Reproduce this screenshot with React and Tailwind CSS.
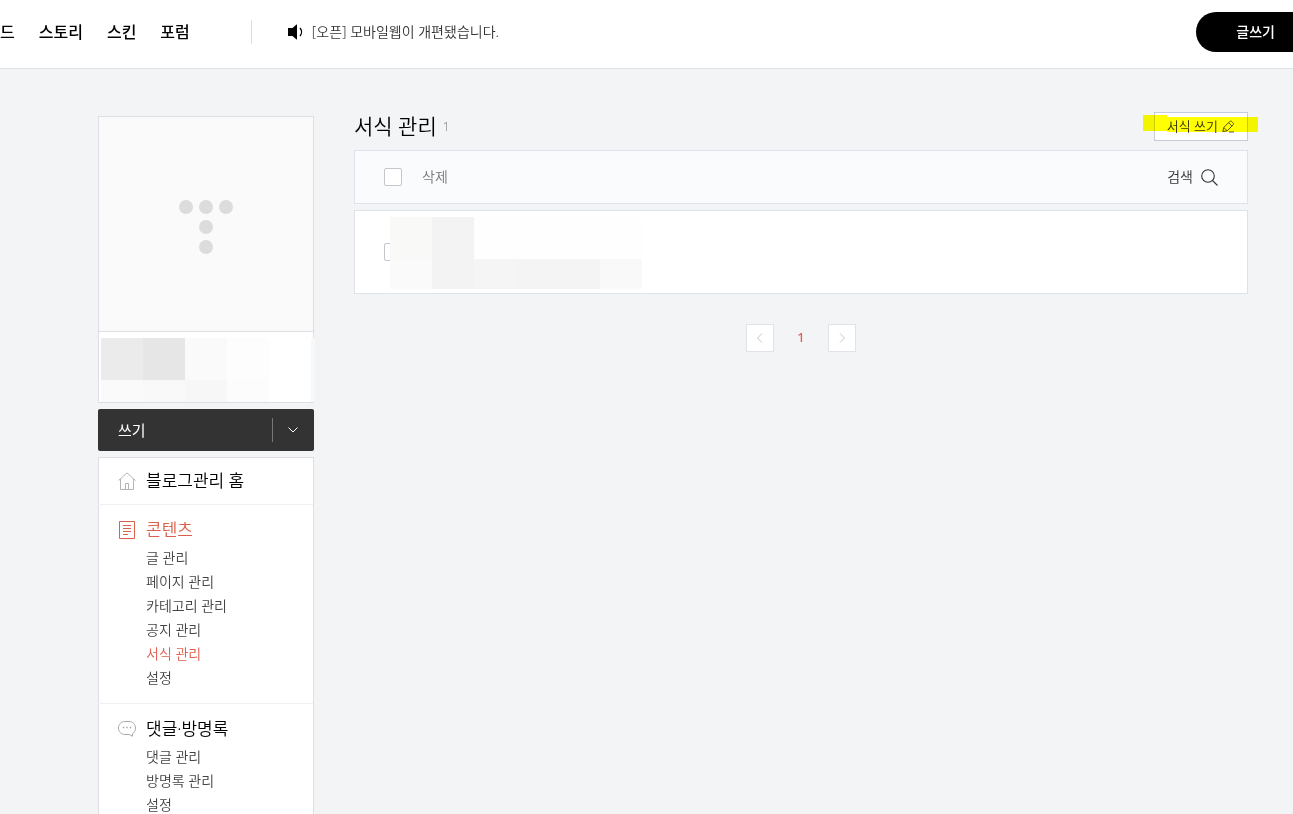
import React from "react";

const contentLinks = ["글 관리", "페이지 관리", "카테고리 관리", "공지 관리", "서식 관리", "설정"];
const commentLinks = ["댓글 관리", "방명록 관리", "설정"];

function SpeakerIcon() {
  return (
    <svg width="16" height="16" viewBox="0 0 16 16" aria-hidden="true">
      <path d="M0 4h4.500l4-3.500H9v15h-.5l-4-3.500H0z" fill="#000" />
      <path d="M12 4c2 2.300 2 5.700 0 8" fill="none" stroke="#000" strokeWidth="1.300" />
    </svg>
  );
}

function PencilIcon() {
  return (
    <svg width="13" height="13" viewBox="0 0 13 13" fill="none" stroke="#555" strokeWidth="1" aria-hidden="true">
      <path d="M.8 11.500l1-4L7.600 1.600c.7-.7 1.500-.7 2.200 0l1.200 1.200c.7.7.7 1.500 0 2.200L5.200 10.800z" />
      <path d="M6.600 2.700l3.300 3.300M1.900 7.600l3.200 3.100M7 12h5" />
    </svg>
  );
}

function SearchIcon() {
  return (
    <svg width="17" height="17" viewBox="0 0 17 17" fill="none" stroke="#333" strokeWidth="1.100" aria-hidden="true">
      <circle cx="7" cy="7" r="6.300" />
      <path d="M11.500 11.500l5 5" />
    </svg>
  );
}

function HomeIcon() {
  return (
    <svg width="18" height="18" viewBox="0 0 18 18" fill="none" stroke="#b5b5b5" strokeWidth="1" aria-hidden="true">
      <path d="M.5 8.500L9 .9l8.500 7.600M2.500 7v10.500h13V7" />
      <path d="M7.500 17.500v-6h3v6" />
    </svg>
  );
}

function DocumentIcon() {
  return (
    <svg width="18" height="18" viewBox="0 0 18 18" fill="none" stroke="#d8604c" strokeWidth="1" aria-hidden="true">
      <path d="M1.500.5h15v17h-15zM5 4.500h8M5 7.500h8M5 10.500h8M5 13.500h5" />
    </svg>
  );
}

function CommentIcon() {
  return (
    <svg width="18" height="18" viewBox="0 0 18 18" fill="none" stroke="#a8a8a8" strokeWidth="1" aria-hidden="true">
      <path d="M14.500 13.700v2.500l-3.300-1.700H7C3.200 14.500.5 11.600.5 8S3.200 1.500 7 1.500h4c3.800 0 6.500 2.900 6.500 6.500 0 2.600-1.200 4.600-3 5.700z" />
      <path d="M4.800 7.500h1.400M8.300 7.500h1.400M11.800 7.500h1.400" strokeWidth="1.400" />
    </svg>
  );
}

function Chevron({ d, stroke }) {
  return (
    <svg width="12" height="12" viewBox="0 0 12 12" fill="none" stroke={stroke} strokeWidth="1" aria-hidden="true">
      <path d={d} />
    </svg>
  );
}

function MenuSection({ icon, title, links, current, active }) {
  return (
    <section className="border-t border-[#f0f1f3] px-5 py-[13px]">
      <a href="#" className={"flex h-6 items-center gap-2.5 text-[17px] " + (active ? "text-[#d8604c]" : "text-black")}>
        {icon}
        {title}
      </a>
      <ul className="mt-1 pl-7 text-sm leading-6">
        {links.map((link) => (
          <li key={link}>
            <a href="#" className={link === current ? "text-[#e0604f]" : "text-[#444]"}>
              {link}
            </a>
          </li>
        ))}
      </ul>
    </section>
  );
}

const checkbox = "block size-[18px] shrink-0 appearance-none rounded-xs border border-[#c4c6cc] bg-white";
const pagerButton = "flex size-7 items-center justify-center border border-[#e0e3e9] bg-white";

export default function App() {
  return (
    <div className="min-h-screen overflow-x-hidden bg-[#f3f4f6] font-['Noto_Sans','Noto_Sans_CJK_KR',sans-serif] font-[350] text-[#333]">
      <header className="flex h-[69px] items-center border-b border-[#e1e3e7] bg-white pb-1">
        <nav className="flex gap-6 text-base font-medium text-black">
          <a href="#">드</a>
          <a href="#">스토리</a>
          <a href="#">스킨</a>
          <a href="#">포럼</a>
        </nav>
        <div className="ml-[61px] h-6 w-px bg-[#dcdde0]" />
        <a href="#" className="ml-9 flex items-center gap-2 text-sm text-[#333]">
          <SpeakerIcon />
          [오픈] 모바일웹이 개편됐습니다.
        </a>
        <button className="ml-auto h-10 rounded-l-full bg-black pr-[18px] pl-10 text-sm font-medium text-white">글쓰기</button>
      </header>

      <div className="flex gap-10 pt-[47px] pr-[45px] pl-[98px]">
        <aside className="flex w-[216px] shrink-0 flex-col gap-1.5">
          <div className="relative border border-[#dddfe5] bg-white">
            <div className="flex h-[215px] items-center justify-center border-b border-[#dddfe5] bg-[#fafafa] pt-1.5">
              <svg width="54" height="54" viewBox="0 0 54 54" fill="#dcdcdc" aria-hidden="true">
                <circle cx="7" cy="7" r="7" />
                <circle cx="27" cy="7" r="7" />
                <circle cx="47" cy="7" r="7" />
                <circle cx="27" cy="27" r="7" />
                <circle cx="27" cy="47" r="7" />
              </svg>
            </div>
            <div className="h-[70px]" />
            <div className="absolute -right-0.5 bottom-0 grid grid-cols-[42px_42px_42px_42px_42px_4px] grid-rows-[42px_22px]">
              <div className="bg-[#ebebeb]" />
              <div className="bg-[#e6e6e6]" />
              <div className="bg-[#fafafa]" />
              <div className="bg-[#fdfdfd]" />
              <div className="bg-white" />
              <div className="bg-[#f6f8fa]" />
              <div className="bg-[#fafafa]" />
              <div className="bg-[#f9f9f9]" />
              <div className="bg-[#f7f7f7]" />
              <div className="bg-[#fcfcfc]" />
              <div className="bg-white" />
              <div className="bg-[#f6f8fa]" />
            </div>
          </div>

          <div className="flex h-[42px] items-center rounded-xs bg-[#333] text-white">
            <button className="flex-1 pl-5 text-left text-[15px] font-normal">쓰기</button>
            <button aria-label="쓰기 메뉴" className="flex h-6 w-[42px] items-center border-l border-[#777] pl-3.5">
              <Chevron d="M1.500 3.500L6 8l4.500-4.500" stroke="#fff" />
            </button>
          </div>

          <nav className="border border-b-0 border-[#dddfe5] bg-white">
            <a href="#" className="flex h-[46px] items-center gap-2.5 px-[19px] text-[17px] text-black">
              <HomeIcon />
              블로그관리 홈
            </a>
            <div className="-ml-px">
              <MenuSection icon={<DocumentIcon />} title="콘텐츠" links={contentLinks} current="서식 관리" active />
              <MenuSection icon={<CommentIcon />} title="댓글·방명록" links={commentLinks} />
            </div>
          </nav>
        </aside>

        <main className="min-w-0 flex-1">
          <div className="-mt-1 flex h-[29px] items-center justify-between">
            <h1 className="flex items-center gap-1.5 text-[21px] text-black">
              서식 관리
              <span className="text-xs text-[#888]">1</span>
            </h1>
            <div className="relative">
              <button className="flex h-[29px] items-center gap-1 border border-[#c9ccd8] bg-white px-3 text-[13px]">
                서식 쓰기
                <PencilIcon />
              </button>
              <svg
                className="pointer-events-none absolute top-[3px] -right-2.5 mix-blend-multiply"
                width="115"
                height="17"
                viewBox="0 0 115 17"
                aria-hidden="true"
              >
                <path d="M0 0h24v2h91v15H24v-1H0z" fill="#ff0" />
              </svg>
            </div>
          </div>

          <div className="mt-[9px] flex h-[54px] items-center border border-[#dfe2ea] bg-[#fafbfd] px-[29px]">
            <input type="checkbox" aria-label="전체 선택" className={checkbox} />
            <button className="ml-5 text-sm text-[#777]">삭제</button>
            <button className="ml-auto flex items-center gap-2 text-sm">
              검색
              <SearchIcon />
            </button>
          </div>

          <div className="relative mt-1.5 flex h-[84px] items-center border border-[#dfe2ea] bg-white px-[29px]">
            <input type="checkbox" aria-label="서식 선택" className={checkbox} />
            <div className="absolute top-1.5 left-[35px] grid grid-cols-[repeat(6,42px)] grid-rows-[42px_30px]">
              <div className="bg-[#f9f9f8]" />
              <div className="bg-[#f3f3f3]" />
              <div className="col-span-4 bg-[#fefefe]" />
              <div className="bg-[#fafafa]" />
              <div className="bg-[#f3f3f3]" />
              <div className="bg-[#f5f5f5]" />
              <div className="bg-[#f4f4f4]" />
              <div className="bg-[#f4f4f4]" />
              <div className="bg-[#f9f9f9]" />
            </div>
          </div>

          <div className="mt-[30px] flex items-center justify-center">
            <button aria-label="이전 페이지" className={pagerButton}>
              <Chevron d="M8 1.500L3.500 6L8 10.500" stroke="#c4c6ca" />
            </button>
            <a href="#" className="w-[54px] text-center text-[13px] font-medium text-[#e0604f]">
              1
            </a>
            <button aria-label="다음 페이지" className={pagerButton}>
              <Chevron d="M4 1.500L8.500 6L4 10.500" stroke="#c4c6ca" />
            </button>
          </div>
        </main>
      </div>
    </div>
  );
}
